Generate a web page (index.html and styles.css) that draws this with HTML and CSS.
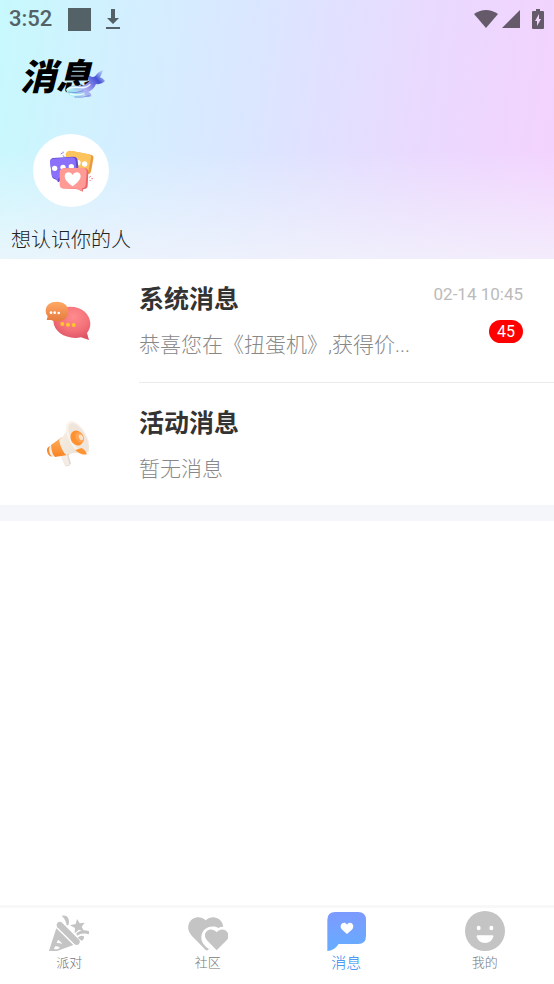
FILE: index.html
```html
<!DOCTYPE html>
<html lang="zh-CN">
<head>
  <meta charset="UTF-8">
  <meta name="viewport" content="width=device-width, initial-scale=1.0">
  <title>消息</title>
  <link rel="stylesheet" href="styles.css">
</head>
<body>
  <header class="top">
    <div class="status-bar">
      <span class="clock">3:52</span>
      <span class="square"></span>
      <svg class="download" viewBox="0 0 16 22" width="16" height="22" fill="currentColor">
        <path d="M6 1h4v9h4l-6 6-6-6h4zM1 19h14v2H1z"/>
      </svg>
      <div class="status-right">
        <svg viewBox="0 0 24 20" width="24" height="20" fill="currentColor">
          <path d="M0 5Q12-3 24 5L12 19z"/>
        </svg>
        <svg viewBox="0 0 18 20" width="18" height="20" fill="currentColor">
          <path d="M18 1v18H0z"/>
        </svg>
        <svg class="battery" viewBox="0 0 12 20" width="12" height="20">
          <path fill="currentColor" d="M4 0h4v2h3q1 0 1 1v16q0 1-1 1H1q-1 0-1-1V3q0-1 1-1h3z"/>
          <path fill="#f1d5fd" d="M7 5l-4 7h2v5l4-7H7z"/>
        </svg>
      </div>
    </div>

    <div class="title">
      <h1>消息</h1>
      <svg class="whale" viewBox="0 0 120 90" width="40" height="30">
        <defs>
          <linearGradient id="whaleBody" x1="0" y1="0.6" x2="1" y2="0">
            <stop offset="0" stop-color="#a5f0f0"/>
            <stop offset="0.35" stop-color="#a9a6f0"/>
            <stop offset="0.7" stop-color="#4450d6"/>
            <stop offset="1" stop-color="#8fa4f5" stop-opacity="0.2"/>
          </linearGradient>
        </defs>
        <path fill="url(#whaleBody)" d="M3 62Q14 46 42 51Q64 49 72 37Q68 26 74 20Q84 27 91 21Q98 9 114 3Q110 18 105 25Q114 27 120 36Q107 49 93 45Q86 62 70 69Q80 73 79 82Q66 88 58 79Q45 88 24 83Q7 78 3 62z"/>
        <path fill="none" stroke="#e9fbff" stroke-width="4" d="M5 62Q22 52 45 56Q64 58 76 46M15 75Q38 81 58 74"/>
        <path fill="none" stroke="#6370df" stroke-width="2" d="M10 69Q32 75 56 65M28 84Q50 87 74 80"/>
      </svg>
    </div>

    <a class="visitors" href="#visitors">
      <span class="avatar">
        <svg viewBox="0 0 135 126" width="45" height="42">
          <path fill="#e89b43" d="M55 10Q58 2 68 3l57 11q10 2 8 12l-7 39q-3 9-10 7L55 62z"/>
          <path fill="#fdc35d" d="M50 11Q54 1 64 2l54 10q9 2 8 11l-7 38q-2 8-11 7L50 60z"/>
          <circle cx="107" cy="42" r="8" fill="#fff"/>
          <circle cx="87" cy="38" r="8" fill="#fff"/>
          <path fill="#6149cb" d="M12 24l61-4q12 0 13 12l4 40-10 18H36l-7 7-7-8Q9 87 8 75L4 35Q3 26 12 24z"/>
          <path fill="#8a70fa" d="M12 26l56-4q11 0 12 11l3 34q0 11-10 12l-45 6-1 11-8-11Q9 83 8 73L3 38Q2 28 12 26z"/>
          <g fill="#fff">
            <circle cx="17" cy="55" r="8"/>
            <circle cx="42" cy="52" r="8"/>
            <circle cx="67" cy="50" r="8"/>
          </g>
          <path fill="#e9656c" d="M43 54h63q11 1 12 12l-2 42q-2 10-13 9l-2 8-15-7-40-3z"/>
          <path fill="#ff9a95" d="M44 55l57-2q12 0 12 12l-3 40q-1 9-11 10l1 9-16-8H44q-11 0-12-11V67q0-11 12-12z"/>
          <path fill="#fff" d="M71 109Q47 93 47 79c0-13 17-17 24-4 7-13 24-9 24 4 0 14-24 30-24 30z"/>
          <path fill="none" stroke="#8a70fa" stroke-width="3" d="M35 12l5-2M42 16l4 5M42 5v5"/>
          <path fill="none" stroke="#ef7a82" stroke-width="3" d="M121 83l4-5M127 86h5M122 90l3 3"/>
        </svg>
      </span>
      <span class="visitors-label">想认识你的人</span>
    </a>
  </header>

  <main>
    <a class="message" href="#system">
      <span class="message-icon">
        <svg viewBox="0 0 138 120" width="46" height="40">
          <defs>
            <radialGradient id="redBubble" cx="0.55" cy="0.3" r="0.7">
              <stop offset="0" stop-color="#ff8c90"/>
              <stop offset="0.6" stop-color="#f37078"/>
              <stop offset="1" stop-color="#dc5365"/>
            </radialGradient>
            <linearGradient id="orangeBubble" x1="0" y1="0" x2="0" y2="1">
              <stop offset="0" stop-color="#ffa965"/>
              <stop offset="1" stop-color="#e67a3e"/>
            </linearGradient>
          </defs>
          <path fill="url(#redBubble)" d="M25 61C23 32 47 17 76 17c34 0 59 22 60 50 0 13-4 22-10 29l6 21-24-8c-42 8-81-14-83-48z"/>
          <path fill="url(#orangeBubble)" d="M2 31C2 12 15 2 36 2c20 0 34 12 34 29 0 20-14 30-34 30-7 0-12-1-17-4L5 57l3-11Q2 39 2 31z"/>
          <g fill="#fff">
            <circle cx="18" cy="35" r="4"/>
            <circle cx="29" cy="35" r="4"/>
            <circle cx="41" cy="36" r="4"/>
          </g>
          <g fill="#ffc62b">
            <circle cx="52" cy="69" r="6"/>
            <circle cx="69" cy="71" r="6"/>
            <circle cx="86" cy="72" r="6"/>
          </g>
        </svg>
      </span>
      <span class="message-body">
        <span class="message-text">
          <strong>系统消息</strong>
          <span class="preview">恭喜您在《扭蛋机》,获得价...</span>
        </span>
        <span class="message-meta">
          <time>02-14 10:45</time>
          <span class="badge">45</span>
        </span>
      </span>
    </a>
    <a class="message" href="#activity">
      <span class="message-icon">
        <svg viewBox="0 0 126 141" width="42" height="47">
          <defs>
            <linearGradient id="horn" x1="0" y1="0" x2="1" y2="1">
              <stop offset="0" stop-color="#f8f1e8"/>
              <stop offset="1" stop-color="#ebdfd2"/>
            </linearGradient>
            <linearGradient id="orangeBand" x1="0" y1="0" x2="0" y2="1">
              <stop offset="0" stop-color="#ffad5c"/>
              <stop offset="1" stop-color="#f88423"/>
            </linearGradient>
          </defs>
          <path fill="#e0d6ce" d="M42 108l20-11 10 34q-5 9-17 8z"/>
          <path fill="#f4ede5" d="M40 106l18-9 10 37-12 4z"/>
          <path fill="#f58b35" d="M14 77Q-2 80 0 93q2 14 14 17z"/>
          <path fill="#f7ede2" d="M12 76Q4 82 7 96q4 14 12 13l10-3-9-34z"/>
          <path fill="url(#orangeBand)" d="M12 75l32-23 22 52-42 7Q14 103 12 75z"/>
          <path fill="url(#horn)" d="M36 60Q60 42 66 6L118 101Q85 92 58 106 43 92 36 60z"/>
          <ellipse cx="93" cy="54" rx="27" ry="56" transform="rotate(-29 93 54)" fill="#f9f3eb"/>
          <ellipse cx="95" cy="54" rx="22" ry="50" transform="rotate(-29 95 54)" fill="#f0e5da"/>
          <path fill="#ff9433" d="M85 90Q98 105 119 103 118 92 104 84z"/>
          <ellipse cx="90" cy="54" rx="19" ry="23" transform="rotate(-25 90 54)" fill="#ff9130"/>
          <ellipse cx="98" cy="52" rx="12" ry="17" transform="rotate(-25 98 52)" fill="#ffa352"/>
          <ellipse cx="102" cy="52" rx="6" ry="9" transform="rotate(-25 102 52)" fill="#ffe1c5"/>
        </svg>
      </span>
      <span class="message-body">
        <span class="message-text">
          <strong>活动消息</strong>
          <span class="preview">暂无消息</span>
        </span>
      </span>
    </a>
  </main>

  <nav class="tabs">
    <a href="#party">
      <svg viewBox="0 0 120 120" width="40" height="40" fill="currentColor">
        <path d="M25 36q7-7 15 0l51 51q4 6-1 12-6 5-13 1L25 49q-5-7 0-13z"/>
        <path fill-rule="evenodd" d="M22 52l51 50-65 24q-10 3-8-7zM27 86l-4 10q8-1 17 3-4-8-13-13zm-9 20l-3 8q6 2 13-1l5-3q-7-5-15-4z"/>
        <path d="M38 14q22-5 22 21-1 10-7 8-2-17-15-29z"/>
        <path d="M84 24l8 13 15-2-9 12 8 15-16-6-13 11 1-16-15-8 17-4z"/>
        <path d="M82 66q17-13 38-5v9q-21-6-36 4z"/>
        <path d="M86 80q10-9 19-4 1 10-7 13z"/>
      </svg>
      <span>派对</span>
    </a>
    <a href="#community">
      <svg viewBox="0 0 120 120" width="40" height="40" fill="currentColor">
        <path d="M53 28C38 12 11 17 3 37c-8 19 5 34 14 43l36 37q5 4 10-3C45 102 37 88 41 71c5-21 31-31 50-20 7-5 12-4 15-4C103 20 72 9 53 28z"/>
        <path d="M86 118L57 88C38 66 68 43 86 64c18-21 48 2 30 24z"/>
      </svg>
      <span>社区</span>
    </a>
    <a class="active" href="#messages">
      <svg viewBox="0 0 120 120" width="40" height="40">
        <defs>
          <linearGradient id="chatFill" x1="0" y1="0" x2="0" y2="1">
            <stop offset="0" stop-color="#7d9aff"/>
            <stop offset="1" stop-color="#65adff"/>
          </linearGradient>
        </defs>
        <path fill="url(#chatFill)" d="M28 3h68q24 0 24 24v48q0 24-24 24H38Q24 120 4 120V26Q4 3 28 3z"/>
        <path fill="#fff" d="M63 69L47 55c-10-15 8-27 16-14 8-13 26-1 16 14z"/>
      </svg>
      <span>消息</span>
    </a>
    <a href="#mine">
      <svg viewBox="0 0 120 120" width="40" height="40">
        <circle cx="60" cy="60" r="60" fill="currentColor"/>
        <g fill="#fff">
          <ellipse cx="41" cy="51" rx="6" ry="7"/>
          <ellipse cx="79" cy="51" rx="6" ry="7"/>
          <path d="M38 73h44q3 0 3 3-4 20-25 20T35 76q0-3 3-3z"/>
        </g>
      </svg>
      <span>我的</span>
    </a>
  </nav>
</body>
</html>
```
FILE: styles.css
```css
* {
  box-sizing: border-box;
}
body {
  display: flex;
  flex-direction: column;
  min-height: 100vh;
  margin: 0;
  background: #fff;
  color: #333;
  font-family: Roboto, "Noto Sans CJK SC", sans-serif;
}
a {
  color: inherit;
  text-decoration: none;
}
svg {
  display: block;
  flex: none;
}

/* header */
.top {
  padding-bottom: 4px;
  background:
    linear-gradient(to bottom, rgba(243, 245, 251, 0) 58%, rgba(243, 245, 251, 0.75)),
    linear-gradient(98deg, #c7f9fd 0%, #d3efff 22%, #dbe6ff 45%, #ead9fe 75%, #f4d2fe 100%);
}
.status-bar {
  display: flex;
  align-items: center;
  height: 38px;
  padding: 0 10px 0 9px;
  color: #546166;
}
.clock {
  font-size: 22px;
  line-height: 38px;
  font-weight: 500;
}
.square {
  width: 23px;
  height: 23px;
  margin: 0 14px 0 16px;
  background: #546166;
}
.status-right {
  display: flex;
  align-items: center;
  gap: 4px;
  margin-left: auto;
  color: #655a6a;
}
.battery {
  margin-left: 8px;
}
.title {
  position: relative;
  height: 96px;
  padding: 18px 0 0 20px;
}
.title h1 {
  margin: 0;
  color: #000;
  font-size: 36px;
  font-style: italic;
  font-weight: 900;
  line-height: 44px;
}
.whale {
  position: absolute;
  left: 65px;
  top: 31px;
}
.visitors {
  display: inline-flex;
  flex-direction: column;
  align-items: center;
  gap: 19px;
  padding-left: 11px;
}
.avatar {
  display: flex;
  align-items: center;
  justify-content: center;
  width: 76px;
  height: 73px;
  border-radius: 50%;
  background: #fff;
}
.visitors-label {
  color: #222;
  font-size: 20px;
  font-weight: 300;
  line-height: 29px;
}

/* message list */
main {
  border-bottom: 16px solid #f5f6fa;
}
.message {
  display: flex;
  height: 123px;
}
.message-icon {
  display: flex;
  align-items: center;
  justify-content: center;
  width: 139px;
  padding-right: 3px;
}
.message-body {
  display: flex;
  flex: 1;
  justify-content: space-between;
  min-width: 0;
  padding: 23px 31px 0 0;
}
.message + .message .message-body {
  border-top: 1px solid #ebebeb;
}
.message-text {
  display: flex;
  flex-direction: column;
  gap: 12px;
  min-width: 0;
}
.message-text strong {
  font-size: 25px;
  line-height: 36px;
}
.preview {
  overflow: hidden;
  color: #888;
  font-size: 21px;
  font-weight: 300;
  line-height: 30px;
  white-space: nowrap;
  text-overflow: ellipsis;
}
.message-meta {
  display: flex;
  flex: none;
  flex-direction: column;
  align-items: flex-end;
  gap: 16px;
  padding-top: 2px;
}
.message-meta time {
  color: #bbb;
  font-size: 17px;
  line-height: 20px;
}
.badge {
  padding: 0 8px;
  border-radius: 12px;
  background: #f00;
  color: #fff;
  font-size: 16px;
  line-height: 23px;
}

/* bottom tabs */
.tabs {
  display: flex;
  height: 79px;
  margin-top: auto;
  border-top: 3px solid #f8f8f8;
}
.tabs a {
  display: flex;
  flex: 1;
  flex-direction: column;
  align-items: center;
  gap: 2px;
  padding-top: 3px;
  color: #c4c4c4;
}
.tabs span {
  color: #777;
  font-size: 13px;
  font-weight: 300;
  line-height: 20px;
}
.tabs .active span {
  color: #2a8af0;
  font-size: 15px;
}
```
